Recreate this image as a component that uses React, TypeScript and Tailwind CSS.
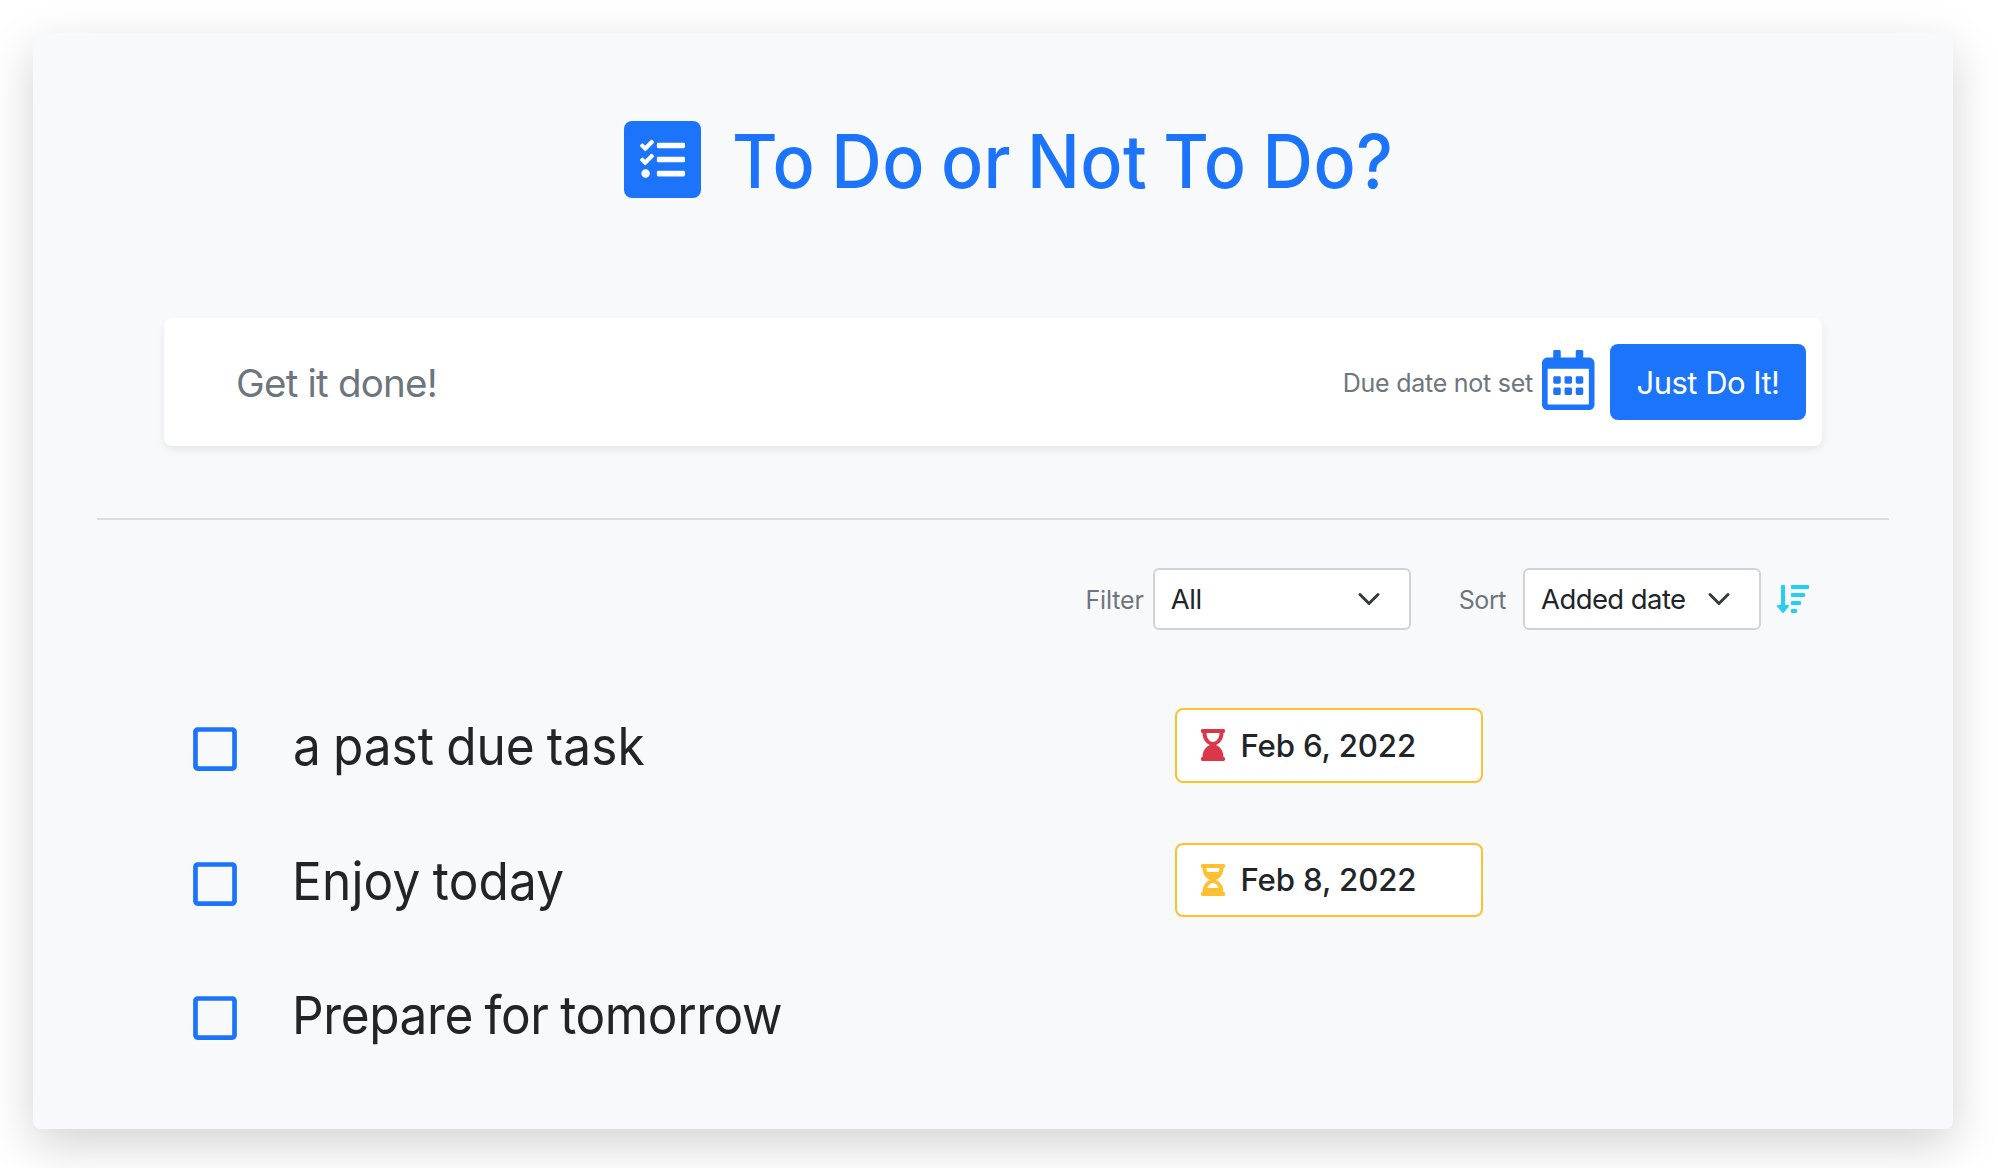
import {
  FaTasks,
  FaRegCalendarAlt,
  FaSortAmountDown,
  FaHourglassEnd,
  FaHourglassHalf,
  FaRegSquare,
} from 'react-icons/fa';

function Chevron() {
  return (
    <svg viewBox="0 0 16 16" className="size-6 shrink-0" fill="none" stroke="#343a40" strokeWidth={2} strokeLinecap="round" strokeLinejoin="round">
      <path d="m2 5 6 6 6-6" />
    </svg>
  );
}

function Select({ value, className, spacing }: { value: string; className: string; spacing: string }) {
  return (
    <button
      type="button"
      className={`flex h-[62px] items-center justify-between rounded-[6px] border-2 border-[#ced4da] bg-white pl-[16px] text-[27.5px] text-[#212529] ${className}`}
    >
      <span className={`mt-[2px] ${spacing}`}>{value}</span>
      <Chevron />
    </button>
  );
}

type Task = { title: string; spacing: string; due?: string; overdue?: boolean };

const tasks: Task[] = [
  { title: 'a past due task', spacing: 'tracking-[0.05px] pl-[1px]', due: 'Feb 6, 2022', overdue: true },
  { title: 'Enjoy today', spacing: 'tracking-[0.2px]', due: 'Feb 8, 2022' },
  { title: 'Prepare for tomorrow', spacing: 'tracking-[-0.42px]' },
];

function TaskRow({ title, spacing, due, overdue }: Task) {
  return (
    <li className="flex h-[134.5px] items-center">
      <FaRegSquare className="mt-[6px] h-[50px] w-[44px] shrink-0 text-[#1c74fb]" />
      <span className={`ml-[55px] w-[883px] origin-left scale-x-[0.94] whitespace-nowrap text-[52.7px] leading-[64px] text-[#212529] [word-spacing:-2px] ${spacing}`}>
        {title}
      </span>
      {due && (
        <span className="mb-[2px] flex h-[74.5px] w-[308px] items-center rounded-[8px] border-2 border-[#ffc02f] bg-white pl-[24px] text-[31.2px] font-medium tracking-[-0.14px] text-[#212529]">
          {overdue ? (
            <FaHourglassEnd className="h-[32px] w-[24px] text-[#db3748]" />
          ) : (
            <FaHourglassHalf className="h-[32px] w-[24px] text-[#ffc02f]" />
          )}
          <span className="ml-[15.5px] mt-[2px]">{due}</span>
        </span>
      )}
    </li>
  );
}

export default function App() {
  return (
    <div className="h-[1168px] overflow-hidden bg-white px-[33px] pt-[33px] pr-[45px] font-[Inter,sans-serif]">
      <main className="flex h-[1096px] flex-col rounded-[8px] bg-[#f8f9fb] px-[64px] shadow-[0_16px_48px_rgba(0,0,0,0.175)]">
        <header className="mt-[88px] flex h-[77px] items-start pl-[527px]">
          <span className="flex size-[77px] shrink-0 items-center justify-center rounded-[8px] bg-[#1c74fb]">
            <FaTasks className="size-[45px] text-white" />
          </span>
          <h1 className="ml-[31px] mt-px origin-left scale-x-[0.945] whitespace-nowrap text-[74px] font-medium leading-[78px] tracking-[0.38px] text-[#1c74fb] [word-spacing:-3px]">
            To Do or Not To Do?
          </h1>
        </header>

        <form className="mx-[67px] mt-[120px] flex h-[128px] shrink-0 items-center rounded-[8px] bg-white pl-[72px] pr-[16px] shadow-[0_4px_8px_rgba(0,0,0,0.075)]">
          <input
            placeholder="Get it done!"
            className="mt-[2px] h-[60px] min-w-0 flex-1 bg-transparent text-[38.5px] tracking-[-0.77px] outline-none placeholder:text-[#6d757d]"
          />
          <span className="mr-[9px] mt-[4px] whitespace-nowrap text-[25px] tracking-[-0.25px] text-[#6d757d]">Due date not set</span>
          <FaRegCalendarAlt className="mb-[4px] h-[60px] w-[52.5px] shrink-0 text-[#1c74fb]" />
          <button
            type="button"
            className="ml-[15.5px] h-[76px] w-[196px] shrink-0 rounded-[8px] bg-[#1c74fb] pt-[2px] text-[31px] tracking-[-0.54px] text-white"
          >
            Just Do It!
          </button>
        </form>

        <hr className="mt-[72px] h-[2px] shrink-0 border-0 bg-[#dddee5]" />

        <div className="mr-[80px] mt-[48px] flex h-[62px] shrink-0 items-center justify-end">
          <label className="mr-[9px] mt-[4px] text-[25px] tracking-[-0.15px] text-[#6d757d]">Filter</label>
          <Select value="All" className="w-[258px] pr-[28px]" spacing="tracking-[-0.47px]" />
          <label className="ml-[48px] mr-[17px] mt-[4px] text-[25px] tracking-[-0.44px] text-[#6d757d]">Sort</label>
          <Select value="Added date" className="w-[238px] pr-[28px]" spacing="tracking-[-0.58px]" />
          <FaSortAmountDown className="ml-[16px] size-[32px] text-[#27cdf2]" />
        </div>

        <ul className="mt-[49px] pl-[96px]">
          {tasks.map((task) => (
            <TaskRow key={task.title} {...task} />
          ))}
        </ul>
      </main>
    </div>
  );
}
